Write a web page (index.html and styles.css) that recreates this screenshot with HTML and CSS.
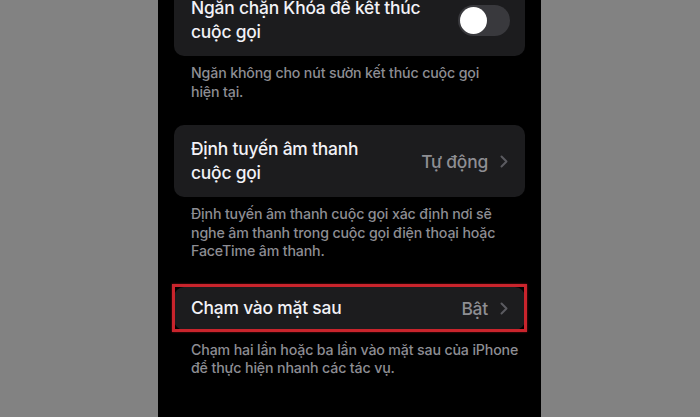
FILE: index.html
```html
<!DOCTYPE html>
<html lang="vi">
<head>
<meta charset="utf-8">
<link rel="stylesheet" href="styles.css">
</head>
<body>
<div class="stage">
  <div class="screen">
    <div class="card card-first">
      <div class="row row-two">
        <div class="label">Ngăn chặn Khóa để kết thúc<br>cuộc gọi</div>
        <div class="toggle"><span class="knob"></span></div>
      </div>
    </div>
    <p class="note note-first">Ngăn không cho nút sườn kết thúc cuộc gọi<br>hiện tại.</p>

    <div class="card">
      <div class="row row-two">
        <div class="label">Định tuyến âm thanh<br>cuộc gọi</div>
        <div class="value">Tự động
          <svg class="chev" viewBox="0 0 8 13" width="8" height="13"><path d="M1.5 1.5 L6.5 6.5 L1.5 11.5" fill="none" stroke="currentColor" stroke-width="2" stroke-linecap="round" stroke-linejoin="round"/></svg>
        </div>
      </div>
    </div>
    <p class="note">Định tuyến âm thanh cuộc gọi xác định nơi sẽ<br>nghe âm thanh trong cuộc gọi điện thoại hoặc<br>FaceTime âm thanh.</p>

    <div class="card card-marked">
      <div class="row row-one">
        <div class="label">Chạm vào mặt sau</div>
        <div class="value">Bật
          <svg class="chev" viewBox="0 0 8 13" width="8" height="13"><path d="M1.5 1.5 L6.5 6.5 L1.5 11.5" fill="none" stroke="currentColor" stroke-width="2" stroke-linecap="round" stroke-linejoin="round"/></svg>
        </div>
      </div>
      <span class="highlight"></span>
    </div>
    <p class="note note-last">Chạm hai lần hoặc ba lần vào mặt sau của iPhone<br>để thực hiện nhanh các tác vụ.</p>
  </div>
</div>
</body>
</html>
```
FILE: styles.css
```css
html, body {
  margin: 0;
  padding: 0;
}
body {
  width: 700px;
  height: 417px;
  overflow: hidden;
  background: #828282;
  font-family: Inter, "Noto Sans", "Liberation Sans", sans-serif;
}
.stage {
  display: flex;
  justify-content: flex-start;
  height: 417px;
  padding-left: 158px;
}
.screen {
  width: 383px;
  height: 417px;
  background: #000;
  padding: 0 16px;
  box-sizing: border-box;
  overflow: hidden;
}
.card {
  background: #1c1c1e;
  border-radius: 10px;
  position: relative;
}
.card-first {
  margin-top: -16px;
}
.row {
  display: flex;
  align-items: center;
  justify-content: space-between;
  padding: 0 17px;
}
.row-two {
  padding-top: 12px;
  padding-bottom: 12px;
}
.row-one {
  height: 43px;
}
.label {
  color: #f2f2f7;
  font-size: 17.4px;
  font-weight: 500;
  line-height: 24px;
  letter-spacing: -0.2px;
}
.value {
  display: flex;
  align-items: center;
  gap: 12px;
  color: #8e8e93;
  font-size: 17.4px;
  font-weight: 500;
  letter-spacing: -0.2px;
}
.chev {
  color: #5b5b60;
}
.toggle {
  width: 52px;
  height: 31px;
  border-radius: 16px;
  background: #39393d;
  position: relative;
  margin-right: -2px;
}
.knob {
  position: absolute;
  left: 2px;
  top: 2px;
  width: 27px;
  height: 27px;
  border-radius: 50%;
  background: #fff;
}
.note {
  margin: 8px 0 24px;
  padding: 0 4px 0 17px;
  color: #8d8d93;
  font-size: 14.2px;
  font-weight: 500;
  line-height: 18.5px;
  letter-spacing: -0.15px;
  white-space: nowrap;
}
.note-last {
  margin-top: 11px;
}
.card-marked {
  margin-top: 26px;
}
.highlight {
  position: absolute;
  left: -2px;
  right: -2px;
  top: -3px;
  bottom: -2px;
  border: 3px solid #c9242c;
  box-shadow: 0 0 2px rgba(200, 30, 40, 0.6);
  pointer-events: none;
}
```
